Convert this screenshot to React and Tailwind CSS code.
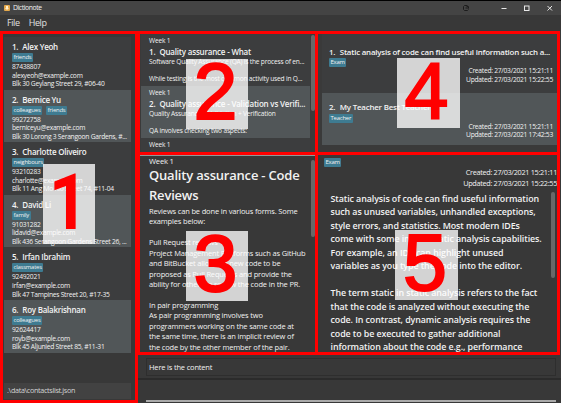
import React from "react";

const contacts = [
  { name: "Alex Yeoh", tags: ["friends"], phone: "87438807", email: "alexyeoh@example.com", address: "Blk 30 Geylang Street 29, #06-40" },
  { name: "Bernice Yu", tags: ["colleagues", "friends"], phone: "99272758", email: "berniceyu@example.com", address: "Blk 30 Lorong 3 Serangoon Gardens, #..." },
  { name: "Charlotte Oliveiro", tags: ["neighbours"], phone: "93210283", email: "charlotte@example.com", address: "Blk 11 Ang Mo Kio Street 74, #11-04" },
  { name: "David Li", tags: ["family"], phone: "91031282", email: "lidavid@example.com", address: "Blk 436 Serangoon Gardens Street 26, ..." },
  { name: "Irfan Ibrahim", tags: ["classmates"], phone: "92492021", email: "irfan@example.com", address: "Blk 47 Tampines Street 20, #17-35" },
  { name: "Roy Balakrishnan", tags: ["colleagues"], phone: "92624417", email: "royb@example.com", address: "Blk 45 Aljunied Street 85, #11-31" },
];

const lessons = [
  { title: "Quality assurance - What", first: "Software Quality Assurance (QA) is the process of en...", second: "While testing is the most common activity used in Q..." },
  { title: "Quality assurance - Validation vs Verifi...", first: "Quality Assurance = Validation + Verification", second: "QA involves checking two aspects:" },
];

const lessonBody = [
  "Reviews can be done in various forms. Some",
  "examples below:",
  "",
  "Pull Request reviews",
  "Project Management Platforms such as GitHub",
  "and BitBucket allow the new code to be",
  "proposed as Pull Requests and provide the",
  "ability for others to review the code in the PR.",
  "",
  "In pair programming",
  "As pair programming involves two",
  "programmers working on the same code at",
  "the same time, there is an implicit review of",
  "the code by the other member of the pair.",
];

const noteBody = [
  "Static analysis of code can find useful information",
  "such as unused variables, unhandled exceptions,",
  "style errors, and statistics. Most modern IDEs",
  "come with some inbuilt static analysis capabilities.",
  "For example, an IDE can highlight unused",
  "variables as you type the code into the editor.",
  "",
  "The term static in static analysis refers to the fact",
  "that the code is analyzed without executing the",
  "code. In contrast, dynamic analysis requires the",
  "code to be executed to gather additional",
  "information about the code e.g., performance",
];

const notes = [
  { title: "Static analysis of code can find useful information such a...", tag: "Exam", updated: "15:22:55", box: "h-[59px] pt-[11.5px] bg-[#3c3d3e]" },
  { title: "My Teacher Best Teacher", tag: "Teacher", updated: "17:42:53", box: "h-[52px] pt-[8px] bg-[#515658]" },
];

function Tag({ children }) {
  return <span className="h-[9px] rounded-[1px] bg-[#3e7b91] px-[1.5px] text-[5.9px] leading-[8.5px] tracking-[-0.18px]">{children}</span>;
}

function Frame({ className }) {
  return <div className={"absolute border-[3px] border-[#ff0000] " + className} />;
}

function Marker({ className, children }) {
  return (
    <div className={"absolute flex items-center justify-center bg-white/78 leading-none text-[#ff0000] " + className}>
      {children}
    </div>
  );
}

function Contacts() {
  return (
    <aside className="flex h-[372px] w-[137px] flex-col bg-[#383838] pl-[4px] pt-[6px]">
      <div className="w-[127px]">
        {contacts.map((c, i) => (
          <div key={c.name} className={"h-[52.6px] pl-[8px] pt-[4px] " + (i % 2 ? "bg-[#515658]" : "bg-[#3c3d3e]")}>
            <div className="flex h-[12px] gap-[4px] text-[8px] font-semibold leading-[12px] tracking-[-0.25px]">
              <span>{i + 1}.</span>
              <span>{c.name}</span>
            </div>
            <div className="flex h-[10px] gap-[4px]">
              {c.tags.map((t) => <Tag key={t}>{t}</Tag>)}
            </div>
            <div className="text-[6.7px] leading-[8.6px] tracking-[-0.26px]">
              <p>{c.phone}</p>
              <p>{c.email}</p>
              <p>{c.address}</p>
            </div>
          </div>
        ))}
      </div>
      <div className="mt-[30px] h-[16px] w-[127px] bg-[#424242] pl-[3px] text-[7.2px] leading-[15px] tracking-[-0.32px] text-[#d4d4d4]">.\data\contactslist.json</div>
    </aside>
  );
}

function LessonList() {
  return (
    <section className="flex h-[121px] justify-between overflow-hidden bg-[#3a3a3a] pl-[4px] pr-[3px]">
      <div className="w-[169px] pt-[2.5px] text-[6.6px] leading-[8.6px] tracking-[-0.19px]">
        {lessons.map((l, i) => (
          <div key={l.title} className={"h-[52.4px] pl-[8px] pt-[3px] " + (i % 2 ? "bg-[#515658]" : "bg-[#3c3d3e]")}>
            <p className="h-[9px]">Week 1</p>
            <div className="flex h-[12px] gap-[4px] text-[8px] font-semibold leading-[12.5px] tracking-[-0.2px]">
              <span>{i + 1}.</span>
              <span>{l.title}</span>
            </div>
            <p>{l.first}</p>
            <p className="pt-[8.5px]">{l.second}</p>
          </div>
        ))}
        <div className="h-[16px] bg-[#3c3d3e] pl-[8px] pt-[3px]">Week 1</div>
      </div>
      <div className="mt-[4px] h-[76px] w-[4px] rounded-[2px] bg-[#686868]" />
    </section>
  );
}

function LessonView() {
  return (
    <section className="flex h-[197px] justify-between overflow-hidden bg-[#383838] pl-[12px] pr-[3px]">
      <div>
        <p className="h-[10px] text-[7.6px] leading-[10px] tracking-[-0.2px]">Week 1</p>
        <h1 className="pb-[1px] text-[13px] font-semibold leading-[19.5px] tracking-[-0.2px]">Quality assurance - Code<br />Reviews</h1>
        <div className="text-[7.5px] leading-[10.45px] tracking-[-0.16px]">
          {lessonBody.map((t, i) => <p key={i} className="h-[10.45px]">{t}</p>)}
        </div>
      </div>
      <div className="mt-[4px] h-[77px] w-[4px] rounded-[2px] bg-[#686868]" />
    </section>
  );
}

function NoteList() {
  return (
    <section className="h-[121px] bg-[#3a3a3a] pl-[4px] pr-[3px] pt-[3px]">
      {notes.map((n, i) => (
        <div key={n.title} className={"px-[7px] " + n.box}>
          <div className="flex h-[12.5px] gap-[4.5px] text-[7.9px] font-semibold leading-[12px] tracking-[-0.2px]">
            <span>{i + 1}.</span>
            <span>{n.title}</span>
          </div>
          <div className="flex h-[9px]"><Tag>{n.tag}</Tag></div>
          <div className="-mr-[2px] text-right text-[6.7px] leading-[8.5px] tracking-[-0.26px]">
            <p>Created: 27/03/2021 15:21:11</p>
            <p>Updated: 27/03/2021 {n.updated}</p>
          </div>
        </div>
      ))}
    </section>
  );
}

function NoteView() {
  return (
    <section className="h-[200px] overflow-hidden bg-[#383838] pl-[6px] pr-[4px] pt-[5px]">
      <div className="flex h-[9px]"><Tag>Exam</Tag></div>
      <div className="text-right text-[7.3px] leading-[10.5px] tracking-[-0.32px]">
        <p>Created: 27/03/2021 15:21:11</p>
        <p>Updated: 27/03/2021 15:22:55</p>
      </div>
      <div className="flex justify-between pl-[6.5px] pr-[2px] pt-[3.5px]">
        <div className="text-[8.9px] font-semibold leading-[13.5px] tracking-[-0.09px]">
          {noteBody.map((t, i) => <p key={i} className="h-[13.5px]">{t}</p>)}
        </div>
        <div className="h-[86px] w-[4px] rounded-[2px] bg-[#686868]" />
      </div>
    </section>
  );
}

export default function App() {
  return (
    <div className="relative h-[403px] w-[561px] overflow-hidden whitespace-nowrap bg-[#383838] font-['Open_Sans','Noto_Sans',sans-serif] text-[#f2f2f2]">
      <header className="flex h-[15px] items-center border-t border-black bg-[#444444] pl-[4px] pr-[6px] text-[6.8px] tracking-[-0.4px]">
        <svg className="h-[6px] w-[6px]" viewBox="0 0 6 6">
          <rect width="6" height="6" rx="1" fill="#e5a94c" />
          <path d="M2 1h2v2h1L3 5 1 3h1z" fill="#fff0ce" />
        </svg>
        <span className="ml-[3px] flex-1">Dictionote</span>
        <svg className="h-[9px] w-[95px]" viewBox="0 0 95 9" fill="none" stroke="#e8e8e8">
          <path d="M7.5 1.5h-3l-1 1v3l1 1h3l1-1M5.5 4h3M6.5 2.5h2v2" stroke="#1c1c1c" />
          <path d="M41.5 4.5h5" />
          <rect x="64.5" y="2" width="4.5" height="4.5" />
          <path d="M87.5 2l4.5 4.5m0-4.5l-4.5 4.5" />
        </svg>
      </header>
      <nav className="flex h-[16px] items-center gap-[9px] bg-[#383838] pl-[7px] text-[9px] leading-[16px] tracking-[-0.4px] text-[#e0e0e0]">
        <span>File</span>
        <span>Help</span>
      </nav>
      <div className="flex">
        <Contacts />
        <div className="w-[424px]">
          <div className="flex">
            <div className="w-[181px]">
              <LessonList />
              <div className="h-[4px] border-b border-[#8f9a9a]" />
              <LessonView />
            </div>
            <div className="w-[243px]">
              <NoteList />
              <div className="h-px" />
              <NoteView />
            </div>
          </div>
          <div className="pl-[9px] pr-[5px] pt-[5px]">
            <div className="h-[18px] border border-[#2e2e2e] pl-[2px] text-[7.5px] leading-[16px] tracking-[-0.18px]">Here is the content</div>
          </div>
          <div className="mt-[2px] h-[1.5px] bg-[#2b2b2b]" />
          <div className="ml-[9px] mr-[5px] mt-[20.5px] h-[1.5px] bg-[#aaaaaa]" />
        </div>
      </div>

      <Frame className="left-0 top-[31px] h-[372px] w-[138px]" />
      <Frame className="left-[137px] top-[31px] h-[124px] w-[181px]" />
      <Frame className="left-[137px] top-[152px] h-[203px] w-[181px]" />
      <Frame className="left-[315px] top-[31px] h-[124px] w-[245px]" />
      <Frame className="left-[315px] top-[152px] h-[203px] w-[245px]" />
      <Marker className="left-[43px] top-[164px] h-[80px] w-[52px] pb-[3px] font-['Roboto',sans-serif] text-[78px] font-bold">
        <span className="-translate-x-[1px] scale-x-88">1</span>
      </Marker>
      <Marker className="left-[186px] top-[59px] h-[70px] w-[62px] pb-[5px] pr-[3px] font-['Liberation_Sans',sans-serif] text-[79px] [-webkit-text-stroke:2px_#ff0000]">2</Marker>
      <Marker className="left-[186px] top-[231px] h-[70px] w-[62px] pb-[5px] pr-[3px] font-['Liberation_Sans',sans-serif] text-[79px] [-webkit-text-stroke:2px_#ff0000]">3</Marker>
      <Marker className="left-[397px] top-[58px] h-[70px] w-[63px] pb-[5px] pr-[4px] font-['Liberation_Sans',sans-serif] text-[79px] [-webkit-text-stroke:2px_#ff0000]">4</Marker>
      <Marker className="left-[395px] top-[230px] h-[70px] w-[63px] pb-[5px] pr-[3px] font-['Liberation_Sans',sans-serif] text-[79px] [-webkit-text-stroke:2px_#ff0000]">5</Marker>
    </div>
  );
}
